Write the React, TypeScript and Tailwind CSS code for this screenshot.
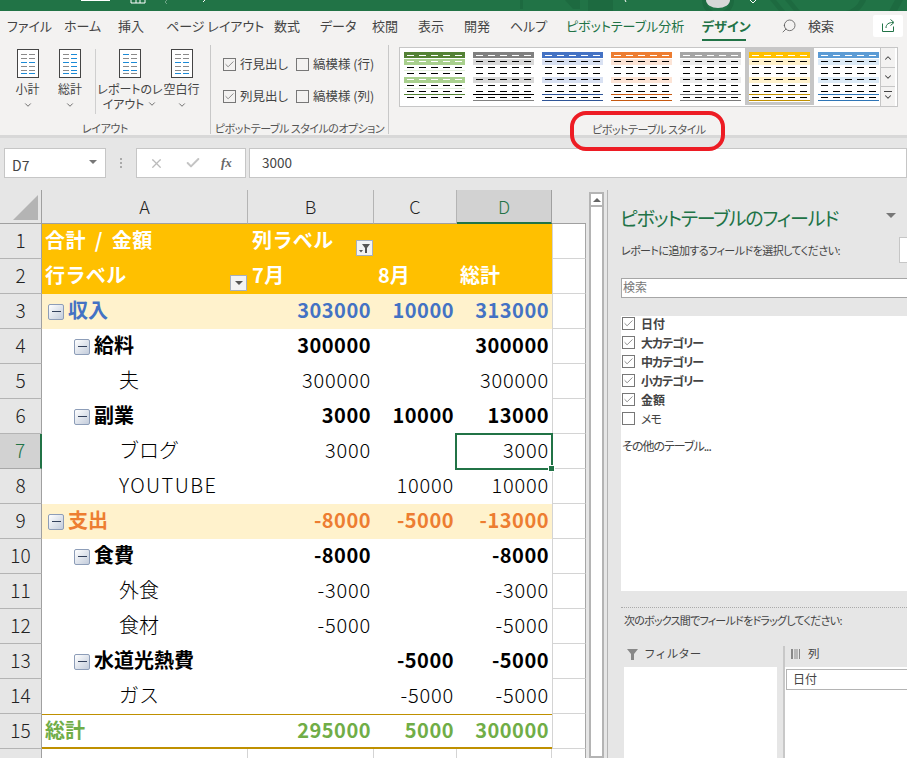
import { Check, ChevronDown, ChevronUp, Search, X } from "lucide-react";

const jp = "font-['Noto_Sans_CJK_JP','Liberation_Sans',sans-serif]";

const tabs = [
  { label: "ファイル", cls: "w-[57px] text-[#444]" },
  { label: "ホーム", cls: "w-[54px] text-[#444]" },
  { label: "挿入", cls: "w-[48px] text-[#444]" },
  { label: "ページ レイアウト", cls: "w-[108px] text-[#444]" },
  { label: "数式", cls: "w-[46px] text-[#444]" },
  { label: "データ", cls: "w-[52px] text-[#444]" },
  { label: "校閲", cls: "w-[46px] text-[#444]" },
  { label: "表示", cls: "w-[46px] text-[#444]" },
  { label: "開発", cls: "w-[46px] text-[#444]" },
  { label: "ヘルプ", cls: "w-[56px] text-[#444]" },
  { label: "ピボットテーブル分析", cls: "w-[136px] text-[#217346]" },
];

const styles = [
  { head: "#548235", band: "#a9d08e", line: "#548235", base: "#548235", thin: "#e2efda", dash: "#fff" },
  { head: "#808080", band: "#d9d9d9", line: "#000000", base: "#808080", thin: "", dash: "#000" },
  { head: "#4472c4", band: "#d9e1f2", line: "#2f5597", base: "#2f5597", thin: "", dash: "#000" },
  { head: "#ed7d31", band: "#fce4d6", line: "#c65911", base: "#c65911", thin: "", dash: "#000" },
  { head: "#a5a5a5", band: "#ededed", line: "#7b7b7b", base: "#7b7b7b", thin: "", dash: "#000" },
  { head: "#ffc000", band: "#fff2cc", line: "#bf9000", base: "#bf9000", thin: "", dash: "#000" },
  { head: "#5b9bd5", band: "#ddebf7", line: "#2e75b6", base: "#2e75b6", thin: "", dash: "#000" },
];

type Row = {
  n: number;
  label?: string;
  level?: number;
  toggle?: boolean;
  b?: string;
  c?: string;
  d?: string;
  kind: "head" | "blue" | "orange" | "bold" | "plain" | "total";
};

const rows: Row[] = [
  { n: 1, label: "合計 / 金額", b: "列ラベル", kind: "head" },
  { n: 2, label: "行ラベル", b: "7月", c: "8月", d: "総計", kind: "head" },
  { n: 3, label: "収入", level: 0, toggle: true, b: "303000", c: "10000", d: "313000", kind: "blue" },
  { n: 4, label: "給料", level: 1, toggle: true, b: "300000", d: "300000", kind: "bold" },
  { n: 5, label: "夫", level: 2, b: "300000", d: "300000", kind: "plain" },
  { n: 6, label: "副業", level: 1, toggle: true, b: "3000", c: "10000", d: "13000", kind: "bold" },
  { n: 7, label: "ブログ", level: 2, b: "3000", d: "3000", kind: "plain" },
  { n: 8, label: "YOUTUBE", level: 2, c: "10000", d: "10000", kind: "plain" },
  { n: 9, label: "支出", level: 0, toggle: true, b: "-8000", c: "-5000", d: "-13000", kind: "orange" },
  { n: 10, label: "食費", level: 1, toggle: true, b: "-8000", d: "-8000", kind: "bold" },
  { n: 11, label: "外食", level: 2, b: "-3000", d: "-3000", kind: "plain" },
  { n: 12, label: "食材", level: 2, b: "-5000", d: "-5000", kind: "plain" },
  { n: 13, label: "水道光熱費", level: 1, toggle: true, c: "-5000", d: "-5000", kind: "bold" },
  { n: 14, label: "ガス", level: 2, c: "-5000", d: "-5000", kind: "plain" },
  { n: 15, label: "総計", b: "295000", c: "5000", d: "300000", kind: "total" },
];

const kindCls = {
  head: "bg-[#ffc000] text-white font-bold",
  blue: "bg-[#fff2cc] text-[#4472c4] font-bold",
  orange: "bg-[#fff2cc] text-[#ed7d31] font-bold",
  bold: "bg-white text-black font-bold",
  plain: "bg-white text-black font-light",
  total: "bg-white text-[#70ad47] font-bold border-t border-b-2 border-t-[#bf9000] border-b-[#bf9000]",
};

const levelCls = ["pl-[6px]", "pl-[32px]", "pl-[77px]"];

const fields = [
  { name: "日付", on: true, cls: "font-bold" },
  { name: "大カテゴリー", on: true, cls: "font-bold tracking-[-1px]" },
  { name: "中カテゴリー", on: true, cls: "font-bold tracking-[-1px]" },
  { name: "小カテゴリー", on: true, cls: "font-bold tracking-[-1px]" },
  { name: "金額", on: true, cls: "font-bold" },
  { name: "メモ", on: false, cls: "tracking-[-1px]" },
];

function DocIcon({ lines }: { lines: [number, number, string][] }) {
  return (
    <svg width="22" height="29" viewBox="0 0 22 29">
      <rect x="0.5" y="0.5" width="21" height="28" fill="#fff" stroke="#444" />
      {lines.map(([x, y, color], i) => (
        <rect key={i} x={x} y={y} width="6" height="1" fill={color} />
      ))}
    </svg>
  );
}

const blue = "#1b8ad6";
const gray = "#8a8a8a";
const fullLines = (left: string, right: string): [number, number, string][] =>
  [5, 9, 13, 17, 21, 24].flatMap((y, i): [number, number, string][] => [
    [4, y, i % 3 === 2 ? blue : left],
    [12, y, i % 3 === 2 ? blue : right],
  ]);

function RibbonButton({ label, lines, w }: { label: string[]; lines: [number, number, string][]; w: string }) {
  return (
    <div className={`flex flex-col items-center ${w}`}>
      <DocIcon lines={lines} />
      <div className="mt-[3px] text-center text-[12px] leading-[15px] text-[#444] [font-feature-settings:'palt'] whitespace-nowrap">
        {label.map((t, i) => (
          <div key={t} className="flex items-center justify-center gap-[3px]">
            {t}
            {label.length > 1 && i === 1 && <ChevronDown size={10} className="text-[#555]" />}
          </div>
        ))}
      </div>
      {label.length === 1 && <ChevronDown size={10} className="mt-[4px] text-[#555]" />}
    </div>
  );
}

function Box({ on, cls }: { on: boolean; cls: string }) {
  return (
    <span className={`flex size-[13px] shrink-0 items-center justify-center border border-[#777] ${cls}`}>
      {on && <Check size={11} strokeWidth={1.6} className="text-[#666]" />}
    </span>
  );
}

function Option({ on, label, w }: { on: boolean; label: string; w: string }) {
  return (
    <div className={`flex items-center gap-[4px] ${w}`}>
      <Box on={on} cls="bg-[#f3f2f1]" />
      <span className="whitespace-nowrap text-[12.5px] text-[#444] [font-feature-settings:'palt']">{label}</span>
    </div>
  );
}

function StyleThumb({ s, selected }: { s: (typeof styles)[number]; selected: boolean }) {
  const xs = [3, 15, 27, 39, 51];
  const dashRows = [
    { y: 3, c: "#fff" },
    { y: 9, c: s.dash },
    { y: 15, c: "#000" },
    { y: 21, c: "#000" },
    { y: 27, c: s.dash },
    { y: 33, c: "#000" },
    { y: 39, c: "#000" },
    { y: 45, c: "#000" },
  ];
  return (
    <div className={`flex h-[57px] w-[69px] items-center justify-center ${selected ? "bg-[#c6c6c6]" : "bg-white"}`}>
      <svg width="61" height="50" viewBox="0 0 61 50" className={selected ? "bg-white" : ""}>
        <rect width="61" height="6" fill={s.head} />
        <rect y="7" width="61" height="6" fill={s.band} />
        <rect y="25" width="61" height="6" fill={s.band} />
        {s.thin && <rect y="18" width="61" height="1" fill={s.thin} />}
        {s.thin && <rect y="36" width="61" height="1" fill={s.thin} />}
        <rect y="42" width="61" height="1" fill={s.line} />
        {!s.thin && <rect y="48" width="61" height="1" fill={s.base} />}
        {dashRows.map((r) =>
          xs.map((x) => <rect key={`${r.y}-${x}`} x={x} y={r.y} width="7" height="1" fill={r.c} />),
        )}
      </svg>
    </div>
  );
}

function Toggle() {
  return (
    <span className="mr-[4px] mt-[3px] flex size-[16px] shrink-0 items-center justify-center rounded-[2px] border border-[#8d9db8] bg-linear-to-br from-white to-[#c3ccdb]">
      <span className="h-px w-[9px] bg-[#33415c]" />
    </span>
  );
}

function NumCell({ v, cls }: { v?: string; cls: string }) {
  return <div className={`flex items-center justify-end pb-[3px] pr-[3px] ${cls}`}>{v}</div>;
}

function SheetRow({ r }: { r: Row }) {
  const k = kindCls[r.kind];
  const isHead = r.kind === "head";
  const active = r.n === 7;
  const track = r.kind === "plain" ? "tracking-[0.8px]" : "tracking-[0.5px]";
  return (
    <div className="flex h-[35px]">
      <div
        className={`flex w-[42px] shrink-0 items-center justify-center border-b border-r pb-[2px] text-[19px] font-light ${
          active
            ? "border-b-[#a8a8a8] border-r-2 border-r-[#217346] bg-[#d2d2d2] text-[#217346]"
            : "border-b-[#b4b4b4] border-r-[#a0a0a0] bg-[#e6e6e6] text-[#222]"
        }`}
      >
        {r.n}
      </div>
      <div
        className={`relative flex w-[206px] items-center whitespace-pre pb-[3px] text-[20px] ${k} ${
          r.level === undefined ? "pl-[3px]" : levelCls[r.level]
        } ${r.label === "YOUTUBE" ? "tracking-[1.4px]" : ""} ${isHead ? "tracking-[0.4px] [word-spacing:4px]" : ""}`}
      >
        {r.toggle && <Toggle />}
        {r.label}
        {r.n === 2 && (
          <span className="absolute right-[1px] bottom-[3px] flex h-[16px] w-[17px] items-center justify-center border border-[#a6b0c0] bg-[#f3f3f3]">
            <span className="border-x-[4px] border-t-[4px] border-x-transparent border-t-[#555]" />
          </span>
        )}
      </div>
      {isHead ? (
        <div className={`relative flex w-[126px] items-center pb-[3px] pl-[4px] text-[20px] tracking-[0.4px] ${k}`}>
          {r.b}
          {r.n === 1 && (
            <span className="absolute right-[1px] bottom-[3px] flex h-[16px] w-[17px] items-center justify-center border border-[#a6b0c0] bg-[#f3f3f3]">
              <svg width="11" height="9" viewBox="0 0 11 9">
                <path d="M3 0h8L8 4v5H6V4z M0 6h4L2 8.5z" fill="#555" />
              </svg>
            </span>
          )}
        </div>
      ) : (
        <NumCell v={r.b} cls={`w-[126px] text-[20px] ${track} ${k}`} />
      )}
      {isHead ? (
        <div className={`flex w-[83px] items-center pb-[3px] pl-[4px] text-[20px] ${k}`}>{r.c}</div>
      ) : (
        <NumCell v={r.c} cls={`w-[83px] text-[20px] ${track} ${k}`} />
      )}
      {isHead ? (
        <div className={`flex w-[95px] items-center pb-[3px] pl-[3px] text-[20px] ${k}`}>{r.d}</div>
      ) : (
        <div className={`relative flex w-[95px] items-center justify-end pb-[3px] pr-[3px] text-[20px] ${track} ${k}`}>
          {r.d}
          {active && (
            <span className="absolute -top-px -left-[2px] -right-px -bottom-px z-10 border-2 border-[#217346]">
              <span className="absolute -right-[4px] -bottom-[4px] size-[7px] border border-white bg-[#217346]" />
            </span>
          )}
        </div>
      )}
      <div className="w-[34px] border-b border-l border-r border-b-[#d4d4d4] border-l-[#d4d4d4] border-r-[#a6a6a6] bg-white" />
    </div>
  );
}

export default function App() {
  return (
    <div className={`relative flex h-[758px] w-[907px] flex-col overflow-hidden bg-[#e6e6e6] ${jp}`}>
      {/* title bar */}
      <div className="h-[11px] shrink-0 bg-[#217346]">
        <svg width="907" height="11" viewBox="0 0 907 11">
          <rect x="81" width="29" height="1" fill="#fff" />
          <path d="M131 3V0M131 3h14V0M136 3V0M140 3V0" stroke="#fff" fill="none" />
          <path d="M167 0l-2 2 2 2" stroke="#6fa487" fill="none" />
          <path d="M205 0l-2 2" stroke="#fff" fill="none" />
          <path d="M520 0v9h3V0zM565 0l8 9h7V0zM588 0h25v11h-25z" fill="#1d6a40" />
          <path d="M625 0l1 2" stroke="#fff" />
          <path d="M702 0a16 16 0 0 0 32 0h-4a12 12 0 0 1-24 0z" fill="#1d6a40" />
          <path d="M706 0a12 8 0 0 0 24 0z" fill="#d8d8d8" />
          <path d="M750 0l3 3 3-3" stroke="#fff" fill="none" />
          <path d="M770 0l9 11h6L776 0zM785 0l9 11h6L791 0zM860 0a20 20 0 0 1-14 11h12a26 26 0 0 0 8-11zM895 0l-6 11h8l6-11z" fill="#1d6a40" />
        </svg>
      </div>

      {/* tabs */}
      <div className="flex h-[29px] shrink-0 items-center bg-[#f3f2f1] pl-[7px] text-[13px] [font-feature-settings:'palt']">
        {tabs.map((t) => (
          <div key={t.label} className={`whitespace-nowrap ${t.cls}`}>
            {t.label}
          </div>
        ))}
        <div className="relative w-[79px] whitespace-nowrap font-bold text-[#217346]">
          デザイン
          <span className="absolute -bottom-[6px] left-0 h-[2px] w-[44px] bg-[#217346]" />
        </div>
        <span className="w-[27px]">
          <Search size={16} strokeWidth={1.2} className="-scale-x-100 text-[#555]" />
        </span>
        <span className="w-[65px] text-[#444]">検索</span>
        <span className="flex h-[22px] w-[30px] items-center justify-center rounded-[2px] bg-white">
          <svg width="15" height="15" viewBox="0 0 15 15" fill="none" stroke="#217346">
            <path d="M1.5 5.5v8h11v-5M5 10c0-4 3-5.500 7-5.500M9.500 1.500l3.500 3-3.500 3" />
          </svg>
        </span>
      </div>

      {/* ribbon */}
      <div className="flex h-[98px] shrink-0 border-b-[3px] border-b-[#d8d8d8] bg-[#f3f2f1]">
        <div className="mb-[1px] mt-[5px] flex w-[211px] flex-col border-r border-r-[#c8c8c8]">
          <div className="flex h-[78px] shrink-0 pl-[2px] pt-[4px]">
            <RibbonButton label={["小計"]} lines={fullLines(gray, gray)} w="w-[51px]" />
            <RibbonButton label={["総計"]} lines={fullLines(gray, blue)} w="w-[34px]" />
            <div className="ml-[8px] mr-[4px] mb-[9px] w-px bg-[#cfcfcf]" />
            <RibbonButton label={["レポートのレ", "イアウト"]} lines={[[4, 5, blue], [12, 5, gray], [4, 9, gray], [12, 9, gray], [4, 13, blue], [12, 13, blue], [4, 17, gray], [12, 17, gray], [4, 21, blue], [12, 21, blue], [4, 24, gray], [12, 24, gray]]} w="w-[60px]" />
            <RibbonButton label={["空白行"]} lines={fullLines(gray, gray)} w="w-[43px]" />
          </div>
          <div className="h-[11px] text-center text-[11px] leading-[11px] tracking-[-0.4px] text-[#555] [font-feature-settings:'palt']">レイアウト</div>
        </div>
        <div className="mb-[1px] mt-[5px] flex w-[178px] flex-col border-r border-r-[#c8c8c8]">
          <div className="flex h-[78px] shrink-0 flex-col gap-[19px] pl-[12px] pt-[13px]">
            <div className="flex h-[13px] items-center">
              <Option on label="行見出し" w="w-[73px]" />
              <Option on={false} label="縞模様 (行)" w="w-[90px]" />
            </div>
            <div className="flex h-[13px] items-center">
              <Option on label="列見出し" w="w-[73px]" />
              <Option on={false} label="縞模様 (列)" w="w-[90px]" />
            </div>
          </div>
          <div className="h-[11px] whitespace-nowrap text-center text-[11px] leading-[11px] tracking-[-0.5px] text-[#555] [font-feature-settings:'palt']">ピボットテーブル スタイルのオプション</div>
        </div>
        <div className="flex flex-col pl-[10px] pt-[7px]">
          <div className="flex h-[60px] w-[499px] border border-[#c6c6c6] bg-white">
            {styles.map((s, i) => (
              <StyleThumb key={s.head} s={s} selected={i === 5} />
            ))}
            <div className="ml-[-3px] flex w-[15px] flex-col border-l border-l-[#c6c6c6] bg-[#f3f2f1] text-[#444]">
              <span className="flex h-[20px] items-center justify-center border-b border-b-[#c6c6c6]"><ChevronUp size={10} strokeWidth={2.5} /></span>
              <span className="flex h-[19px] items-center justify-center border-b border-b-[#c6c6c6]"><ChevronDown size={10} strokeWidth={2.5} /></span>
              <span className="flex h-[19px] flex-col items-center justify-center"><span className="h-px w-[8px] bg-[#444]" /><ChevronDown size={10} strokeWidth={2.5} /></span>
            </div>
          </div>
          <div className="mt-[17px] h-[11px] whitespace-nowrap pl-[193px] text-[11px] leading-[11px] tracking-[-0.5px] text-[#555] [font-feature-settings:'palt']">ピボットテーブル スタイル</div>
        </div>
      </div>

      {/* formula bar */}
      <div className="flex h-[52px] shrink-0 items-start pt-[10px]">
        <div className="ml-[4px] flex h-[30px] w-[102px] items-center justify-between border border-[#c6c6c6] bg-white pl-[7px] pr-[8px] pt-[5px] text-[14px] text-[#444]">
          D7
          <span className="mb-[8px] border-x-[4px] border-t-[4px] border-x-transparent border-t-[#777]" />
        </div>
        <div className="flex h-[30px] w-[30px] flex-col items-center justify-center gap-[2px]">
          <span className="size-[2px] bg-[#aaa]" />
          <span className="size-[2px] bg-[#aaa]" />
          <span className="size-[2px] bg-[#aaa]" />
        </div>
        <div className="flex h-[30px] w-[110px] items-center border border-[#c6c6c6] bg-white pl-[12px]">
          <X size={15} className="text-[#bbb]" />
          <Check size={16} strokeWidth={3} className="ml-[21px] text-[#c4c4c4]" />
          <span className="ml-[20px] font-['Liberation_Serif',serif] text-[13px] italic font-bold text-[#666]">fx</span>
        </div>
        <div className="ml-[3px] h-[30px] flex-1 border border-[#c6c6c6] bg-white pl-[12px] text-[13.5px] leading-[26px] text-[#444]">3000</div>
      </div>

      {/* sheet + panel */}
      <div className="flex min-h-0 flex-1">
        <div className="w-[586px] shrink-0">
          <div className="flex h-[34px]">
            <div className="flex w-[42px] items-end justify-end border-r border-b border-[#a0a0a0] p-[3px]">
              <span className="size-0 border-b-[25px] border-l-[25px] border-b-[#b4b4b4] border-l-transparent" />
            </div>
            {[
              { l: "A", w: "w-[206px]" },
              { l: "B", w: "w-[126px]" },
              { l: "C", w: "w-[83px]" },
            ].map((c) => (
              <div key={c.l} className={`flex items-center justify-center border-r border-b border-r-[#b4b4b4] border-b-[#a0a0a0] text-[18px] font-light text-[#222] ${c.w}`}>
                {c.l}
              </div>
            ))}
            <div className="flex w-[95px] items-center justify-center border-b-2 border-r border-b-[#217346] border-r-[#a0a0a0] bg-[#d2d2d2] text-[18px] font-light text-[#217346]">D</div>
            <div className="w-[34px] border-b border-b-[#a0a0a0]" />
          </div>
          {rows.map((r) => (
            <SheetRow key={r.n} r={r} />
          ))}
          <div className="flex h-[35px]">
            <div className="flex w-[42px] shrink-0 items-center justify-center border-r border-r-[#a0a0a0] text-[19px] font-light text-[#222]">16</div>
            <div className="w-[206px] border-r border-r-[#d4d4d4] bg-white" />
            <div className="w-[126px] border-r border-r-[#d4d4d4] bg-white" />
            <div className="w-[83px] border-r border-r-[#d4d4d4] bg-white" />
            <div className="w-[95px] border-r border-r-[#d4d4d4] bg-white" />
            <div className="w-[34px] border-r border-r-[#a6a6a6] bg-white" />
          </div>
        </div>

        {/* scrollbar */}
        <div className="ml-[3px] mt-[2px] flex w-[15px] shrink-0 flex-col border-2 border-[#b4b4b4] bg-white">
          <span className="flex h-[13px] items-center justify-center border-b-2 border-b-[#b4b4b4]">
            <span className="border-x-[4px] border-b-[4px] border-x-transparent border-b-[#666]" />
          </span>
        </div>

        {/* field panel */}
        <div className="ml-[3px] min-w-0 flex-1 border-l border-l-[#b4b4b4] pl-[13px] pt-[16px]">
          <div className="flex h-[24px] items-center justify-between pr-[11px]">
            <span className="-ml-px whitespace-nowrap text-[19px] leading-[24px] tracking-[-1.2px] text-[#217346] [font-feature-settings:'palt']">ピボットテーブルのフィールド</span>
            <span className="mb-[6px] border-x-[5px] border-t-[5px] border-x-transparent border-t-[#777]" />
          </div>
          <div className="mt-[7px] flex h-[26px] items-center justify-between">
            <span className="whitespace-nowrap text-[11px] tracking-[-0.55px] text-[#444] [font-feature-settings:'palt']">レポートに追加するフィールドを選択してください:</span>
            <span className="h-[26px] w-[8px] border border-r-0 border-[#c6c6c6] bg-white" />
          </div>
          <div className="mt-[15px] h-[20px] border border-r-0 border-[#a6a6a6] bg-white pl-[1px] text-[12px] leading-[15px] text-[#777]">検索</div>
          <div className="mt-[18px] flow-root h-[275px] bg-white pl-[1px]">
            <div className="-mt-[2px] flex flex-col">
              {fields.map((f) => (
                <div key={f.name} className="flex h-[19px] items-center gap-[6px]">
                  <Box on={f.on} cls="bg-white" />
                  <span className={`text-[12px] leading-[15px] text-[#444] [font-feature-settings:'palt'] ${f.cls}`}>{f.name}</span>
                </div>
              ))}
            </div>
            <div className="mt-[10px] text-[12px] leading-[16px] tracking-[-1px] text-[#444] [font-feature-settings:'palt']">その他のテーブル...</div>
          </div>
          <div className="mt-[16px] border-t border-dotted border-t-[#aaa]" />
          <div className="mt-[4px] whitespace-nowrap pl-[3px] text-[11px] tracking-[-0.75px] text-[#444] [font-feature-settings:'palt']">次のボックス間でフィールドをドラッグしてください:</div>
          <div className="mt-[17px] flex pl-[3px]">
            <div className="w-[153px]">
              <div className="flex h-[21px] items-center gap-[6px] pb-[4px] pl-[3px] text-[11.500px] text-[#444]">
                <svg width="11" height="11" viewBox="0 0 11 11"><path d="M0 0h11L7 5v6H4V5z" fill="#888" /></svg>
                フィルター
              </div>
              <div className="h-[100px] bg-white" />
            </div>
            <div className="ml-[6px] flex-1 border-l-2 border-l-[#c8c8c8]">
              <div className="flex h-[21px] items-center gap-[7px] pb-[4px] pl-[6px] text-[11.500px] text-[#444]">
                <svg width="10" height="10" viewBox="0 0 10 10"><path d="M0 0h2v10H0zM3.500 0h1v10h-1zM5.500 0h1v10h-1zM8 0h1v10H8z" fill="#888" /></svg>
                列
              </div>
              <div className="h-[100px] bg-white pl-[1px] pt-[2px]">
                <div className="h-[21px] border border-r-0 border-[#b4b4b4] pl-[6px] text-[12px] leading-[18px] text-[#444]">日付</div>
              </div>
            </div>
          </div>
        </div>
      </div>

      {/* red annotation ring */}
      <div className="absolute left-[570px] top-[111px] h-[40px] w-[155px] rounded-[16px] border-4 border-[#ed1c24]" />
    </div>
  );
}
